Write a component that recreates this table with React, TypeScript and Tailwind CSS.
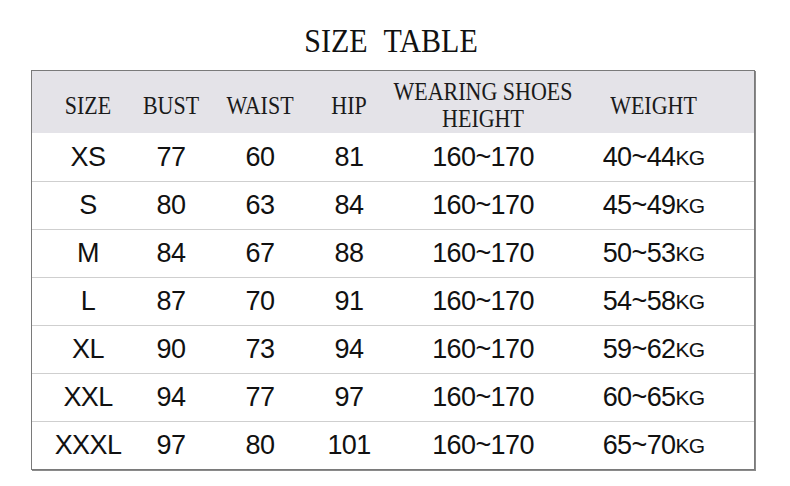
import React from "react";

const rows: [string, string, string, string, string, string][] = [
  ["XS", "77", "60", "81", "160~170", "40~44"],
  ["S", "80", "63", "84", "160~170", "45~49"],
  ["M", "84", "67", "88", "160~170", "50~53"],
  ["L", "87", "70", "91", "160~170", "54~58"],
  ["XL", "90", "73", "94", "160~170", "59~62"],
  ["XXL", "94", "77", "97", "160~170", "60~65"],
  ["XXXL", "97", "80", "101", "160~170", "65~70"],
];

const grid = "grid grid-cols-[112px_54px_124px_54px_214px_1fr]";
const serif = "[font-family:'Liberation_Serif','Times_New_Roman',serif]";
const hText = `inline-block origin-center scale-y-[1.16] text-[22px] leading-none text-[#1a1a1a] ${serif}`;
const h2Text = `inline-block origin-center scale-y-[1.1] text-[22px] leading-none text-[#1a1a1a] ${serif}`;

function H({ children }: { children: React.ReactNode }) {
  return (
    <div className="flex items-center justify-center whitespace-nowrap pt-[7px]">
      <span className={hText}>{children}</span>
    </div>
  );
}

export default function App() {
  return (
    <div className="w-[790px] h-[486px] bg-white overflow-hidden [font-family:'Liberation_Sans',Arial,sans-serif]">
      <div className="h-[70px] flex justify-center items-start pt-[26px]">
        <span className={`inline-block origin-center scale-y-[1.1] text-[30px] leading-none text-[#111] [word-spacing:9px] ${serif} ml-[-8px]`}>
          SIZE TABLE
        </span>
      </div>
      <div className="ml-[31px] w-[724px] border border-[#7a7a7a] shadow-[1px_1px_0_#8a8a8a]">
        <div className={`${grid} h-[62px] bg-[#e4e3e8] pr-[37px]`}>
          <H>SIZE</H>
          <H>BUST</H>
          <H>WAIST</H>
          <H>HIP</H>
          <div className="flex flex-col items-center justify-center gap-[5px] pt-[6px] whitespace-nowrap">
            <span className={h2Text}>WEARING SHOES</span>
            <span className={h2Text}>HEIGHT</span>
          </div>
          <H>WEIGHT</H>
        </div>
        {rows.map((r, i) => (
          <div
            key={r[0]}
            className={`${grid} h-[48px] pr-[37px] text-[27px] text-[#111] tracking-[-0.6px] ${
              i > 0 ? "border-t border-[#cfcfcf]" : ""
            }`}
          >
            {r.slice(0, 5).map((c, j) => (
              <div key={j} className="flex items-center justify-center whitespace-nowrap leading-none">
                {c}
              </div>
            ))}
            <div className="flex items-center justify-center whitespace-nowrap leading-none">
              {r[5]}
              <span className="text-[21px] tracking-[-0.8px]">KG</span>
            </div>
          </div>
        ))}
      </div>
    </div>
  );
}
